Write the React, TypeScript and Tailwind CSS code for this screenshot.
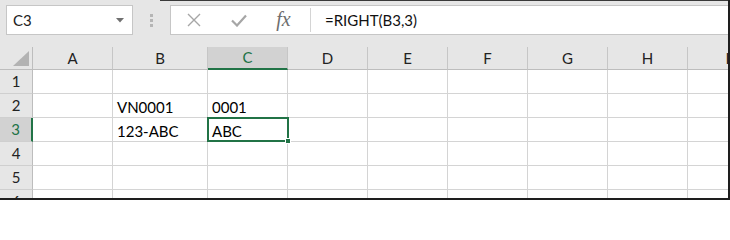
import React from "react";

const cols = [
  { name: "A", w: "w-[80px]" },
  { name: "B", w: "w-[95px]" },
  { name: "C", w: "w-[80px]" },
  { name: "D", w: "w-[80px]" },
  { name: "E", w: "w-[80px]" },
  { name: "F", w: "w-[80px]" },
  { name: "G", w: "w-[80px]" },
  { name: "H", w: "w-[80px]" },
  { name: "I", w: "w-[80px]" },
];

const data: Record<number, Record<string, string>> = {
  2: { B: "VN0001", C: "0001" },
  3: { B: "123-ABC", C: "ABC" },
};

const font = { fontFamily: "Lato, 'Open Sans', sans-serif" };

export default function App() {
  return (
    <div
      className="w-[730px] h-[200px] overflow-hidden bg-[#e6e6e6] flex flex-col border-r-2 border-b-2 border-[#1e1e1e]"
      style={font}
    >
      <div className="h-px ml-[160px] bg-[#3a3a3a] shrink-0" />
      {/* Toolbar */}
      <div className="h-[46px] shrink-0 flex items-start pt-[4px] pl-[6px]">
        <div className="w-[127px] h-[30px] bg-white border border-[#c6c6c6] flex items-center pl-[6px] pr-[8px] justify-between">
          <span className="text-[15px] text-[#222]">C3</span>
          <svg width="8" height="5" viewBox="0 0 8 5">
            <path d="M0 0 L8 0 L4 4.5 Z" fill="#707070" />
          </svg>
        </div>
        <div className="w-[37px] h-[30px] flex flex-col items-center justify-center gap-[2px]">
          <div className="w-[3px] h-[3px] bg-[#b5b5b5]" />
          <div className="w-[3px] h-[3px] bg-[#b5b5b5]" />
          <div className="w-[3px] h-[3px] bg-[#b5b5b5]" />
        </div>
        <div className="flex-1 h-[30px] bg-white border border-[#c6c6c6] border-r-0 flex items-center">
          <div className="w-[45px] h-full flex items-center justify-center">
            <svg width="14" height="14" viewBox="0 0 14 14">
              <path d="M1 1 L13 13 M13 1 L1 13" stroke="#a6a6a6" strokeWidth="1.4" fill="none" />
            </svg>
          </div>
          <div className="w-[45px] h-full flex items-center justify-center">
            <svg width="16" height="13" viewBox="0 0 16 13">
              <path d="M1 6.5 L6 11.5 L15 1.5" stroke="#a6a6a6" strokeWidth="2.2" fill="none" />
            </svg>
          </div>
          <div className="w-[45px] h-full flex items-center justify-center pb-[2px]">
            <span
              className="text-[20px] italic text-[#6e6e6e] leading-none"
              style={{ fontFamily: "'Liberation Serif', 'DejaVu Serif', serif" }}
            >
              fx
            </span>
          </div>
          <div className="ml-[4px] w-px h-[24px] bg-[#d4d4d4]" />
          <div className="pl-[14px] text-[15px] text-[#111]">=RIGHT(B3,3)</div>
        </div>
      </div>
      {/* Column headers */}
      <div className="flex h-[23px] shrink-0">
        <div className="w-[33px] shrink-0 border-r border-b border-[#bdbdbd] flex items-end justify-end pr-[3px] pb-[3px]">
          <svg width="16" height="15" viewBox="0 0 16 15">
            <path d="M16 0 L16 15 L0 15 Z" fill="#b3b3b3" />
          </svg>
        </div>
        {cols.map((c) => {
          const sel = c.name === "C";
          return (
            <div
              key={c.name}
              className={`${c.w} shrink-0 border-r border-[#c6c6c6] flex items-center justify-center text-[15px] ${
                sel
                  ? "bg-[#d2d2d2] text-[#217346] border-b-2 border-b-[#217346]"
                  : "text-[#222] border-b border-b-[#bdbdbd]"
              }`}
            >
              {c.name}
            </div>
          );
        })}
      </div>
      {/* Rows */}
      <div className="flex-1 bg-white overflow-hidden">
        {[1, 2, 3, 4, 5, 6].map((r) => {
          const rsel = r === 3;
          return (
            <div key={r} className="flex h-[24px]">
              <div
                className={`w-[33px] shrink-0 border-b border-b-[#cfcfcf] flex items-center justify-center text-[15px] ${
                  rsel
                    ? "bg-[#d2d2d2] text-[#217346] border-r-2 border-r-[#217346]"
                    : "bg-[#e6e6e6] text-[#222] border-r border-r-[#bdbdbd]"
                }`}
              >
                {r}
              </div>
              {cols.map((c) => {
                const v = data[r]?.[c.name];
                const active = rsel && c.name === "C";
                return (
                  <div
                    key={c.name}
                    className={`${c.w} shrink-0 relative border-r border-b border-[#d4d4d4] flex items-end pl-[4px] text-[15px] text-black leading-[18px] ${
                      active ? "z-10" : ""
                    }`}
                  >
                    {v && <span className="pb-[1px]">{v}</span>}
                    {active && (
                      <div className="absolute left-[-1px] top-[-1px] right-[-2px] bottom-[-1px] border-2 border-[#217346]">
                        <div className="absolute right-[-4px] bottom-[-4px] w-[6px] h-[6px] bg-[#217346] border border-white" />
                      </div>
                    )}
                  </div>
                );
              })}
            </div>
          );
        })}
      </div>
    </div>
  );
}
